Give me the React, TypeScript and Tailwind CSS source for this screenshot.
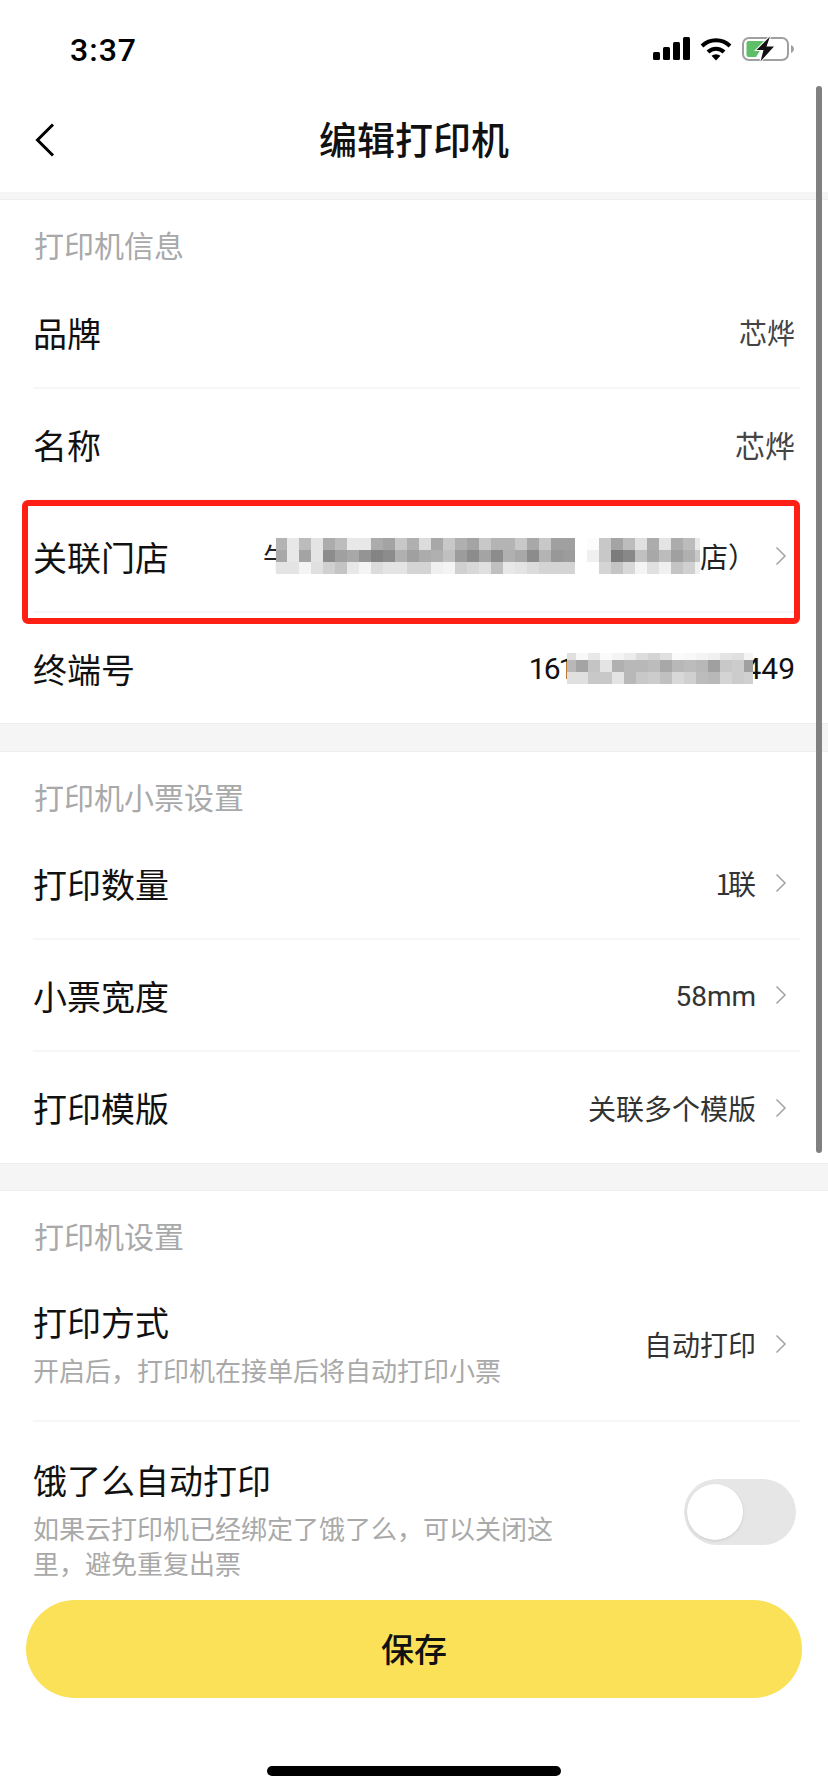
import React from 'react';

const CJK = { fontFamily: '"Noto Sans CJK SC", Roboto, sans-serif' };

// mosaic cells as grey hex pairs, one row per line
const STORE_MOSAIC = [
  'b4 e8 bc e4 ac bc e8 e8 ac a4 c8 b0 dc a8 c8 b0 a4 c8 b4 b4 c8 a8 c8 a0 a0 ff fc c8 a4 bc e0 ac e4 ac bc e8',
  'a8 e8 a4 e4 8c a0 a8 94 84 8c b0 a0 ac b0 c0 9c 8c a4 8c b0 a8 8c b4 98 9c ff f0 c8 7c 88 c0 a8 bc a0 b0 c8',
  'e4 e4 f4 e0 d0 c4 e8 f4 dc e4 e4 d4 d4 f0 f4 d0 d8 e0 c0 e8 e4 dc d4 d4 d4 ff ff d4 c4 d8 f4 e0 f0 c4 d0 f0',
];

const TERMINAL_MOSAIC = [
  'e0 f8 e8 fa f4 ec dc d4 e0 fa f8 f4 f0 e4 e0 f4',
  'b8 a4 c4 e4 b0 b8 b8 bc a8 b8 bc b8 a0 c8 cc a0',
  'e0 e0 c8 c8 e4 b8 c8 cc c0 d8 d0 bc b8 d4 cc d0',
];

const Mosaic = ({ rows, width, height, offsetX, rowHeights, className }: { rows: string[]; width: number; height: number; offsetX: number; rowHeights: number[]; className: string }) => {
  let y = 0;
  return (
    <svg width={width} height={height} viewBox={`0 0 ${width} ${height}`} className={className} shapeRendering="crispEdges">
      <rect width={width} height={height} fill="#fff" />
      {rows.map((row, r) => {
        const top = y;
        y += rowHeights[r];
        return row.split(' ').map((hex, c) => (
          <rect key={`${r}-${c}`} x={offsetX + c * 12} y={top} width={12} height={rowHeights[r]} fill={`#${hex}${hex}${hex}`} />
        ));
      })}
    </svg>
  );
};

const Chevron = () => (
  <svg width="12" height="20" viewBox="0 0 12 20" className="ml-[19px] mr-[8px] shrink-0">
    <path d="M1.5 1.5 L10 10 L1.5 18.5" fill="none" stroke="#a6a6a6" strokeWidth="1.6" />
  </svg>
);

const Band = ({ height }: { height: string }) => <div className={`${height} bg-[#f5f5f5] border-y border-[#eeeeee]`} />;

const SectionTitle = ({ children, height }: { children: React.ReactNode; height: string }) => (
  <div className={`${height} pt-3 pl-[34px] flex items-center text-[30px] text-[#a9a9a9]`}>{children}</div>
);

const Row = ({ label, children, last, height = 'h-[112px]' }: { label: string; children: React.ReactNode; last?: boolean; height?: string }) => (
  <div className={`ml-[33px] mr-[28px] pr-[5px] flex items-center justify-between text-[34px] text-[#111111] ${height} ${last ? '' : 'border-b-2 border-[#f6f6f6]'}`}>
    <span>{label}</span>
    {children}
  </div>
);

const LinkValue = ({ children }: { children: React.ReactNode }) => (
  <div className="flex items-center text-[28px] text-[#333333]">
    <span>{children}</span>
    <Chevron />
  </div>
);

const App = () => {
  return (
    <div className="relative w-[828px] h-[1792px] overflow-hidden bg-white" style={CJK}>
      {/* status bar */}
      <div className="h-[88px] flex items-start justify-between pt-[30px] pl-[70px] pr-[33px]">
        <span className="text-[32px] leading-[40px] font-medium text-black tracking-[1px]" style={{ fontFamily: 'Roboto, sans-serif' }}>3:37</span>
        <div className="flex items-center gap-[10px] pt-[6px]">
          <svg width="37" height="24" viewBox="0 0 37 24">
            <rect x="0" y="15" width="7" height="8" rx="1.5" />
            <rect x="10" y="10" width="7" height="13" rx="1.5" />
            <rect x="20" y="5" width="7" height="18" rx="1.5" />
            <rect x="30" y="0" width="7" height="23" rx="1.5" />
          </svg>
          <svg width="32" height="24" viewBox="0 0 32 24">
            <path d="M2 9 A20 20 0 0 1 30 9" fill="none" stroke="#000" strokeWidth="4" />
            <path d="M8 15 A11.5 11.5 0 0 1 24 15" fill="none" stroke="#000" strokeWidth="4" />
            <path d="M11.5 18.8 L16 23.5 L20.5 18.8 A7 7 0 0 0 11.5 18.8 Z" />
          </svg>
          <svg width="53" height="26" viewBox="0 0 53 26">
            <rect x="1" y="2" width="45" height="22" rx="6" fill="none" stroke="#a0a0a0" strokeWidth="2" />
            <path d="M49 9 C51 10 52 11.5 52 13 C52 14.5 51 16 49 17 Z" fill="#a0a0a0" />
            <path d="M6.5 5 H24 L14 21 H6.5 A2 2 0 0 1 4.5 19 V7 A2 2 0 0 1 6.5 5 Z" fill="#5ebf68" />
            <path d="M28 0.5 L14.5 14 H21.5 L18.5 25.5 L32 10.5 H24.5 Z" fill="#ffffff" stroke="#ffffff" strokeWidth="2" />
            <path d="M28 0.5 L14.5 14 H21.5 L18.5 25.5 L32 10.5 H24.5 Z" fill="#111111" />
          </svg>
        </div>
      </div>

      {/* nav bar */}
      <div className="h-[104px] flex items-center justify-center relative">
        <svg width="20" height="34" viewBox="0 0 20 34" className="absolute left-[35px] top-[35px]">
          <path d="M18 1.5 L2.5 17 L18 32.5" fill="none" stroke="#000" strokeWidth="3" />
        </svg>
        <span className="text-[38px] font-medium text-[#111111] pb-[6px]">编辑打印机</span>
      </div>
      <div className="h-[8px] bg-[#f5f5f5] border-b border-[#eeeeee]" />

      <SectionTitle height="h-[77px]">打印机信息</SectionTitle>
      <Row label="品牌">
        <span className="text-[28px] text-[#444444]">芯烨</span>
      </Row>
      <Row label="名称">
        <span className="text-[30px] text-[#444444]">芯烨</span>
      </Row>
      <div className="relative">
        <Row label="关联门店">
          <div className="flex items-center text-[28px] text-[#222222]">
            <span>牛</span>
            <Mosaic rows={STORE_MOSAIC} width={424} height={36} offsetX={-1} rowHeights={[12, 12, 12]} className="relative z-10 ml-[-15px] mr-0" />
            <span>店）</span>
            <Chevron />
          </div>
        </Row>
        <div className="absolute left-[22px] right-[28px] top-[-1px] bottom-[-11px] border-[6px] border-[#ff2015] rounded-[6px]" />
      </div>
      <Row label="终端号" last height="h-[110px]">
        <div className="flex items-center text-[30px] text-[#111111]" style={{ fontFamily: 'Roboto, sans-serif' }}>
          <span className="tracking-[-2px]">161</span>
          <Mosaic rows={TERMINAL_MOSAIC} width={186} height={31} offsetX={-3} rowHeights={[7, 12, 12]} className="relative z-10 ml-[-6px] mr-[-9px]" />
          <span>449</span>
        </div>
      </Row>
      <Band height="h-[29px]" />

      <SectionTitle height="h-[76px]">打印机小票设置</SectionTitle>
      <Row label="打印数量">
        <LinkValue><span className="tracking-[-3px]">1</span>联</LinkValue>
      </Row>
      <Row label="小票宽度">
        <LinkValue><span style={{ fontFamily: 'Roboto, sans-serif' }}>58mm</span></LinkValue>
      </Row>
      <Row label="打印模版" last height="h-[111px]">
        <LinkValue>关联多个模版</LinkValue>
      </Row>
      <Band height="h-[28px]" />

      <SectionTitle height="h-[77px]">打印机设置</SectionTitle>
      <div className="h-[154px] ml-[33px] mr-[28px] pr-[5px] flex items-center justify-between border-b-2 border-[#f6f6f6]">
        <div className="pb-[4px]">
          <div className="text-[34px] leading-[48px] text-[#111111]">打印方式</div>
          <div className="mt-[6px] text-[26px] leading-[35px] text-[#a9a9a9]">开启后，打印机在接单后将自动打印小票</div>
        </div>
        <LinkValue>自动打印</LinkValue>
      </div>

      <div className="ml-[33px] mr-[32px] flex items-start justify-between pt-[34px] pb-[20px]">
        <div className="w-[530px]">
          <div className="text-[34px] leading-[48px] text-[#111111]">饿了么自动打印</div>
          <div className="mt-[6px] text-[26px] leading-[35px] text-[#a9a9a9]">如果云打印机已经绑定了饿了么，可以关闭这里，避免重复出票</div>
        </div>
        <div className="mt-[23px] w-[112px] h-[66px] rounded-full bg-[#e6e6e6] flex items-center pl-[3px]">
          <div className="w-[56px] h-[56px] rounded-full bg-white shadow-[0_1px_3px_rgba(0,0,0,0.12)]" />
        </div>
      </div>

      <button className="block mx-[26px] w-[776px] h-[98px] rounded-full bg-[#fae158] text-[33px] font-medium text-[#111111]">保存</button>

      <div className="mt-[68px] mx-auto w-[294px] h-[10px] rounded-full bg-black" />

      {/* scroll indicator */}
      <div className="absolute top-[86px] left-[816px] w-[6px] h-[1067px] rounded-full bg-[#808080]" />
    </div>
  );
};

export default App;
